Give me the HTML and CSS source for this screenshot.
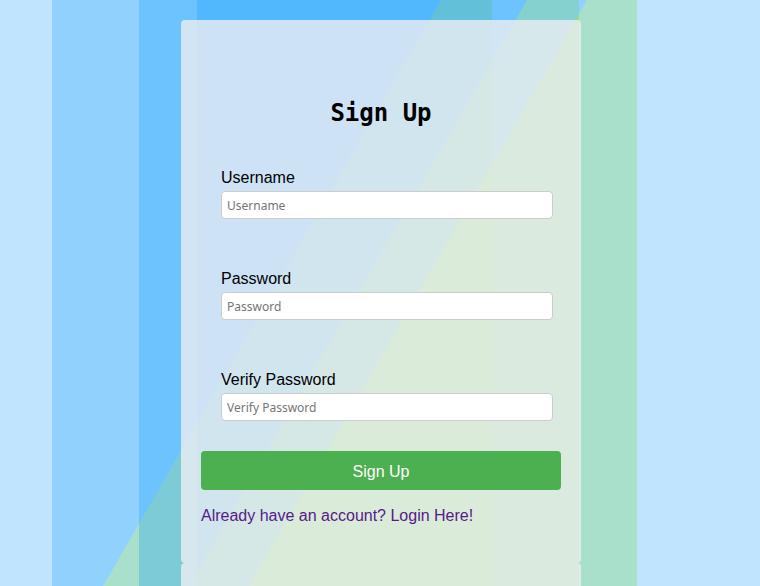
FILE: index.html
```html
<!DOCTYPE html>
<html lang="en">
<head>
<meta charset="utf-8">
<title>Sign Up</title>
<link rel="stylesheet" href="styles.css">
</head>
<body>
<div class="stage">
  <svg class="backdrop" width="760" height="586" viewBox="0 0 760 586" aria-hidden="true">
    <rect x="0" y="0" width="760" height="586" fill="#c0e4fd"/>
    <!-- layer 1 -->
    <rect x="52" y="0" width="585" height="586" fill="#90d1fe"/>
    <polygon points="441,0 637,0 637,586 103,586" fill="#a8e0cc"/>
    <polygon points="579,0 587,0 579,13.9" fill="#90d1fe"/>
    <!-- layer 2 -->
    <rect x="139" y="0" width="440" height="586" fill="#6cc3fe"/>
    <polygon points="441,0 579,0 579,586 139,586 139,523.4" fill="#7ccbd6"/>
    <polygon points="492,0 527,0 492,60.7" fill="#6cc3fe"/>
    <polygon points="527,0 579,0 579,586 188.9,586" fill="#84d1cf"/>
    <polygon points="579,13.9 579,586 248.9,586" fill="#98d98a"/>
    <!-- layer 3 -->
    <rect x="197" y="0" width="295" height="586" fill="#52b8fe"/>
    <polygon points="441,0 492,0 492,586 197,586 197,422.9" fill="#62c0d9"/>
    <polygon points="492,60.7 492,586 197,586 197,571.9" fill="#7ed0b2"/>
    <polygon points="492,164.6 492,586 248.9,586" fill="#97df75"/>
  </svg>

  <div class="panel">
    <div class="card">
      <h2 class="title">Sign Up</h2>
      <form class="form">
        <div class="field">
          <label class="label" for="username">Username</label>
          <input class="input" id="username" type="text" placeholder="Username">
        </div>
        <div class="field">
          <label class="label" for="password">Password</label>
          <input class="input" id="password" type="password" placeholder="Password">
        </div>
        <div class="field">
          <label class="label" for="verify">Verify Password</label>
          <input class="input" id="verify" type="password" placeholder="Verify Password">
        </div>
      </form>
      <button class="submit" type="button">Sign Up</button>
      <p class="switch"><a class="switch-link" href="#login">Already have an account? Login Here!</a></p>
    </div>
    <div class="card-tail"></div>
  </div>
</div>
</body>
</html>
```

FILE: styles.css
```css
html, body {
  margin: 0;
  padding: 0;
}

body {
  width: 760px;
  height: 586px;
  overflow: hidden;
  font-family: "Liberation Sans", Arial, sans-serif;
  background: #c0e4fd;
}

.stage {
  display: grid;
  width: 760px;
  height: 586px;
  overflow: hidden;
}

.backdrop {
  grid-area: 1 / 1;
  display: block;
}

.panel {
  grid-area: 1 / 1;
  align-self: start;
  justify-self: start;
  margin-left: 181px;
  margin-top: 20px;
  width: 400px;
  display: flex;
  flex-direction: column;
}

.card {
  box-sizing: border-box;
  height: 543px;
  padding: 79px 20px 0;
  background: rgba(236, 238, 243, 0.8);
  border-radius: 4px;
}

.card-tail {
  height: 40px;
  background: rgba(236, 238, 243, 0.8);
  border-radius: 4px 4px 0 0;
}

.title {
  margin: 0;
  font-family: "DejaVu Sans Mono", monospace;
  font-size: 24px;
  font-weight: bold;
  line-height: 28px;
  text-align: center;
  color: #000;
}

.form {
  display: flex;
  flex-direction: column;
  gap: 51px;
  margin: 42px 0 0;
  padding: 0 20px;
}

.field {
  display: flex;
  flex-direction: column;
  gap: 4px;
}

.label {
  display: block;
  font-size: 16px;
  line-height: 18px;
  color: #000;
}

.input {
  box-sizing: border-box;
  width: 332px;
  height: 28px;
  margin: 0;
  padding: 0 5px;
  border: 1px solid #cccccc;
  border-radius: 4px;
  background: #fff;
  font-family: "Noto Sans", "Open Sans", sans-serif;
  font-size: 12px;
  color: #333;
  outline: none;
}

.input::placeholder {
  color: #757575;
}

.submit {
  display: block;
  width: 360px;
  height: 39px;
  margin: 30px 0 0;
  padding: 2px 0 0;
  border: none;
  border-radius: 4px;
  background: #4caf50;
  color: #fff;
  font-family: "Liberation Sans", Arial, sans-serif;
  font-size: 16px;
  cursor: pointer;
}

.switch {
  margin: 17px 0 0;
  font-size: 16px;
  line-height: 18px;
}

.switch-link {
  color: #551a8b;
  text-decoration: none;
}
```
